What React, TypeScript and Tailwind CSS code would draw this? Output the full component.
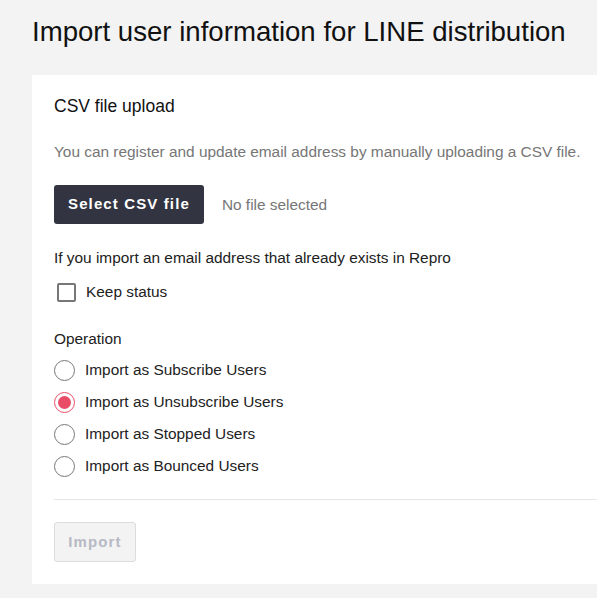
import React from "react";

const font = { fontFamily: '"Liberation Sans", Arial, sans-serif' };

function Radio({ label, checked }: { label: string; checked?: boolean }) {
  return (
    <label className="flex h-[32px] items-center gap-[10px]">
      <span
        className={
          "flex h-[21px] w-[21px] shrink-0 items-center justify-center rounded-full border-[1.5px] bg-white " +
          (checked ? "border-[#e94c66]" : "border-[#777]")
        }
      >
        {checked && <span className="h-[13px] w-[13px] rounded-full bg-[#e94c66]" />}
      </span>
      <span className="text-[15.4px] leading-[22px] text-[#222]">{label}</span>
    </label>
  );
}

export default function App() {
  return (
    <div className="min-h-[598px] w-full overflow-hidden bg-[#f3f3f3]" style={font}>
      <div className="pl-[32px] pt-[15px]">
        <h1 className="text-[27.6px] leading-[34px] text-[#111] whitespace-nowrap">
          Import user information for LINE distribution
        </h1>
        <div className="mt-[26px] w-[600px] bg-white pl-[22px] pt-[19px] pb-[22px]">
          <h2 className="text-[17.5px] leading-[24px] text-[#111]">CSV file upload</h2>
          <p className="mt-[23px] text-[15.4px] leading-[22px] text-[#767676] whitespace-nowrap">
            You can register and update email address by manually uploading a CSV file.
          </p>
          <div className="mt-[22px] flex items-center gap-[18px]">
            <button className="h-[39px] rounded-[3px] bg-[#323541] px-[14px] text-[15px] font-bold tracking-[0.075em] text-white">
              Select CSV file
            </button>
            <span className="text-[15.4px] text-[#767676]">No file selected</span>
          </div>
          <p className="mt-[23px] text-[15.4px] leading-[22px] text-[#222]">
            If you import an email address that already exists in Repro
          </p>
          <label className="mt-[12px] flex h-[22px] items-center gap-[10px] pl-[3px]">
            <span className="h-[19px] w-[19px] rounded-[2px] border-2 border-[#777] bg-white" />
            <span className="text-[15.4px] leading-[22px] text-[#222]">Keep status</span>
          </label>
          <p className="mt-[25px] text-[15.4px] leading-[22px] text-[#222]">Operation</p>
          <div className="mt-[4px] flex flex-col">
            <Radio label="Import as Subscribe Users" />
            <Radio label="Import as Unsubscribe Users" checked />
            <Radio label="Import as Stopped Users" />
            <Radio label="Import as Bounced Users" />
          </div>
          <div className="mt-[17px] h-px bg-[#e6e6e6]" />
          <button
            disabled
            className="mt-[22px] h-[40px] w-[82px] rounded-[3px] border border-[#dcdcdc] bg-[#f3f3f3] text-[15px] font-bold tracking-[0.075em] text-[#b7bac4]"
          >
            Import
          </button>
        </div>
      </div>
    </div>
  );
}
